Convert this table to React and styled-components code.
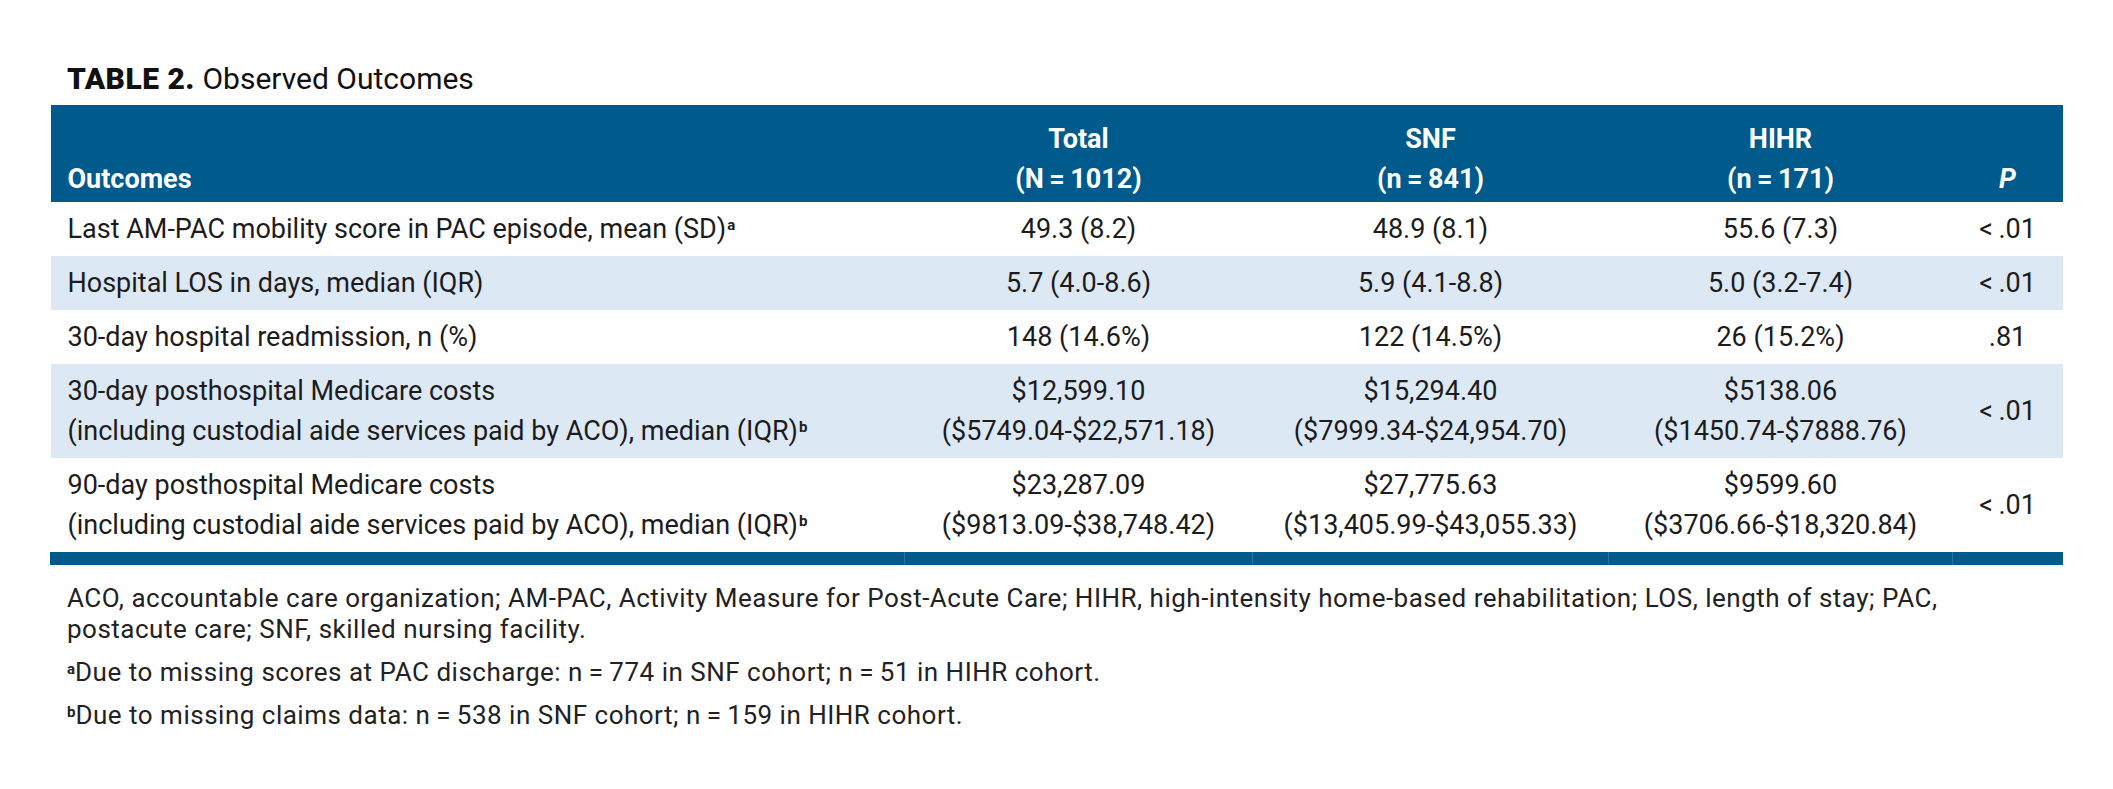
import React from "react";
import styled, { createGlobalStyle } from "styled-components";

const GlobalStyle = createGlobalStyle`
  body {
    margin: 0;
    background: #ffffff;
    font-family: Roboto, "Liberation Sans", sans-serif;
    color: #1c1c1c;
  }
`;

const Page = styled.div`
  width: 2113px;
  height: 789px;
  padding: 59px 0 0 50px;
  box-sizing: border-box;
`;

const Caption = styled.div`
  padding-left: 17px;
  font-size: 30px;
  line-height: 40px;
  color: #111;
  margin-bottom: 6px;
`;

const CaptionLabel = styled.span`
  font-weight: 900;
  letter-spacing: 0.5px;
`;

const Table = styled.table`
  width: 2012px;
  border-collapse: collapse;
  table-layout: fixed;
  font-size: 27px;
`;

const HeadCell = styled.th`
  background: #005a8c;
  color: #ffffff;
  font-weight: 700;
  text-align: ${(p) => (p.$left ? "left" : "center")};
  vertical-align: bottom;
  line-height: 40px;
  padding: 14px 17px 3px;
  font-style: ${(p) => (p.$italic ? "italic" : "normal")};
`;

const Row = styled.tr`
  background: ${(p) => (p.$shaded ? "#dce8f4" : "#ffffff")};
`;

const Cell = styled.td`
  text-align: ${(p) => (p.$left ? "left" : "center")};
  vertical-align: middle;
  line-height: 40px;
  padding: 7px 17px;
  white-space: nowrap;
`;

const BarCell = styled.td`
  background: #005a8c;
  height: 13px;
  padding: 0;
  border-left: 1px solid ${(p) => (p.$first ? "#005a8c" : "#2a73a0")};
`;

const Sup = styled.sup`
  font-size: 15px;
  font-weight: 700;
  vertical-align: top;
  line-height: 1;
  position: relative;
  top: 9px;
  margin-left: 1px;
`;

const Notes = styled.div`
  padding: 18px 17px 0;
  font-size: 26px;
  letter-spacing: 0.5px;
  color: #222;
`;

const Note = styled.p`
  margin: 0 0 12px;
  line-height: 31px;
  white-space: nowrap;
`;

const NoteSup = styled.sup`
  font-size: 15px;
  font-weight: 700;
  vertical-align: top;
  line-height: 1;
  position: relative;
  top: 5px;
  letter-spacing: 0;
`;

const rows = [
  {
    label: ["Last AM-PAC mobility score in PAC episode, mean (SD)"],
    sup: "a",
    total: ["49.3 (8.2)"],
    snf: ["48.9 (8.1)"],
    hihr: ["55.6 (7.3)"],
    p: "<\u2009.01",
  },
  {
    label: ["Hospital LOS in days, median (IQR)"],
    total: ["5.7 (4.0-8.6)"],
    snf: ["5.9 (4.1-8.8)"],
    hihr: ["5.0 (3.2-7.4)"],
    p: "<\u2009.01",
  },
  {
    label: ["30-day hospital readmission, n (%)"],
    total: ["148 (14.6%)"],
    snf: ["122 (14.5%)"],
    hihr: ["26 (15.2%)"],
    p: ".81",
  },
  {
    label: [
      "30-day posthospital Medicare costs",
      "(including custodial aide services paid by ACO), median (IQR)",
    ],
    sup: "b",
    total: ["$12,599.10", "($5749.04-$22,571.18)"],
    snf: ["$15,294.40", "($7999.34-$24,954.70)"],
    hihr: ["$5138.06", "($1450.74-$7888.76)"],
    p: "<\u2009.01",
  },
  {
    label: [
      "90-day posthospital Medicare costs",
      "(including custodial aide services paid by ACO), median (IQR)",
    ],
    sup: "b",
    total: ["$23,287.09", "($9813.09-$38,748.42)"],
    snf: ["$27,775.63", "($13,405.99-$43,055.33)"],
    hihr: ["$9599.60", "($3706.66-$18,320.84)"],
    p: "<\u2009.01",
  },
];

const Lines = ({ lines, sup }) =>
  lines.map((line, i) => (
    <React.Fragment key={i}>
      {i > 0 && <br />}
      {line}
      {sup && i === lines.length - 1 && <Sup>{sup}</Sup>}
    </React.Fragment>
  ));

const App = () => {
  return (
    <Page>
      <GlobalStyle />
      <Caption>
        <CaptionLabel>TABLE 2.</CaptionLabel> Observed Outcomes
      </Caption>
      <Table>
        <colgroup>
          <col style={{ width: 854 }} />
          <col style={{ width: 348 }} />
          <col style={{ width: 356 }} />
          <col style={{ width: 344 }} />
          <col style={{ width: 110 }} />
        </colgroup>
        <thead>
          <tr>
            <HeadCell $left>Outcomes</HeadCell>
            <HeadCell>
              Total
              <br />
              (N{"\u2009=\u2009"}1012)
            </HeadCell>
            <HeadCell>
              SNF
              <br />
              (n{"\u2009=\u2009"}841)
            </HeadCell>
            <HeadCell>
              HIHR
              <br />
              (n{"\u2009=\u2009"}171)
            </HeadCell>
            <HeadCell $italic>P</HeadCell>
          </tr>
        </thead>
        <tbody>
          {rows.map((r, i) => (
            <Row key={i} $shaded={i % 2 === 1}>
              <Cell $left>
                <Lines lines={r.label} sup={r.sup} />
              </Cell>
              <Cell>
                <Lines lines={r.total} />
              </Cell>
              <Cell>
                <Lines lines={r.snf} />
              </Cell>
              <Cell>
                <Lines lines={r.hihr} />
              </Cell>
              <Cell>{r.p}</Cell>
            </Row>
          ))}
          <tr>
            <BarCell $first />
            <BarCell />
            <BarCell />
            <BarCell />
            <BarCell />
          </tr>
        </tbody>
      </Table>
      <Notes>
        <Note>
          ACO, accountable care organization; AM-PAC, Activity Measure for
          Post-Acute Care; HIHR, high-intensity home-based rehabilitation; LOS,
          length of stay; PAC,
          <br />
          postacute care; SNF, skilled nursing facility.
        </Note>
        <Note>
          <NoteSup>a</NoteSup>Due to missing scores at PAC discharge: n{"\u2009=\u2009"}774
          in SNF cohort; n{"\u2009=\u2009"}51 in HIHR cohort.
        </Note>
        <Note>
          <NoteSup>b</NoteSup>Due to missing claims data: n{"\u2009=\u2009"}538 in SNF
          cohort; n{"\u2009=\u2009"}159 in HIHR cohort.
        </Note>
      </Notes>
    </Page>
  );
};

export default App;
